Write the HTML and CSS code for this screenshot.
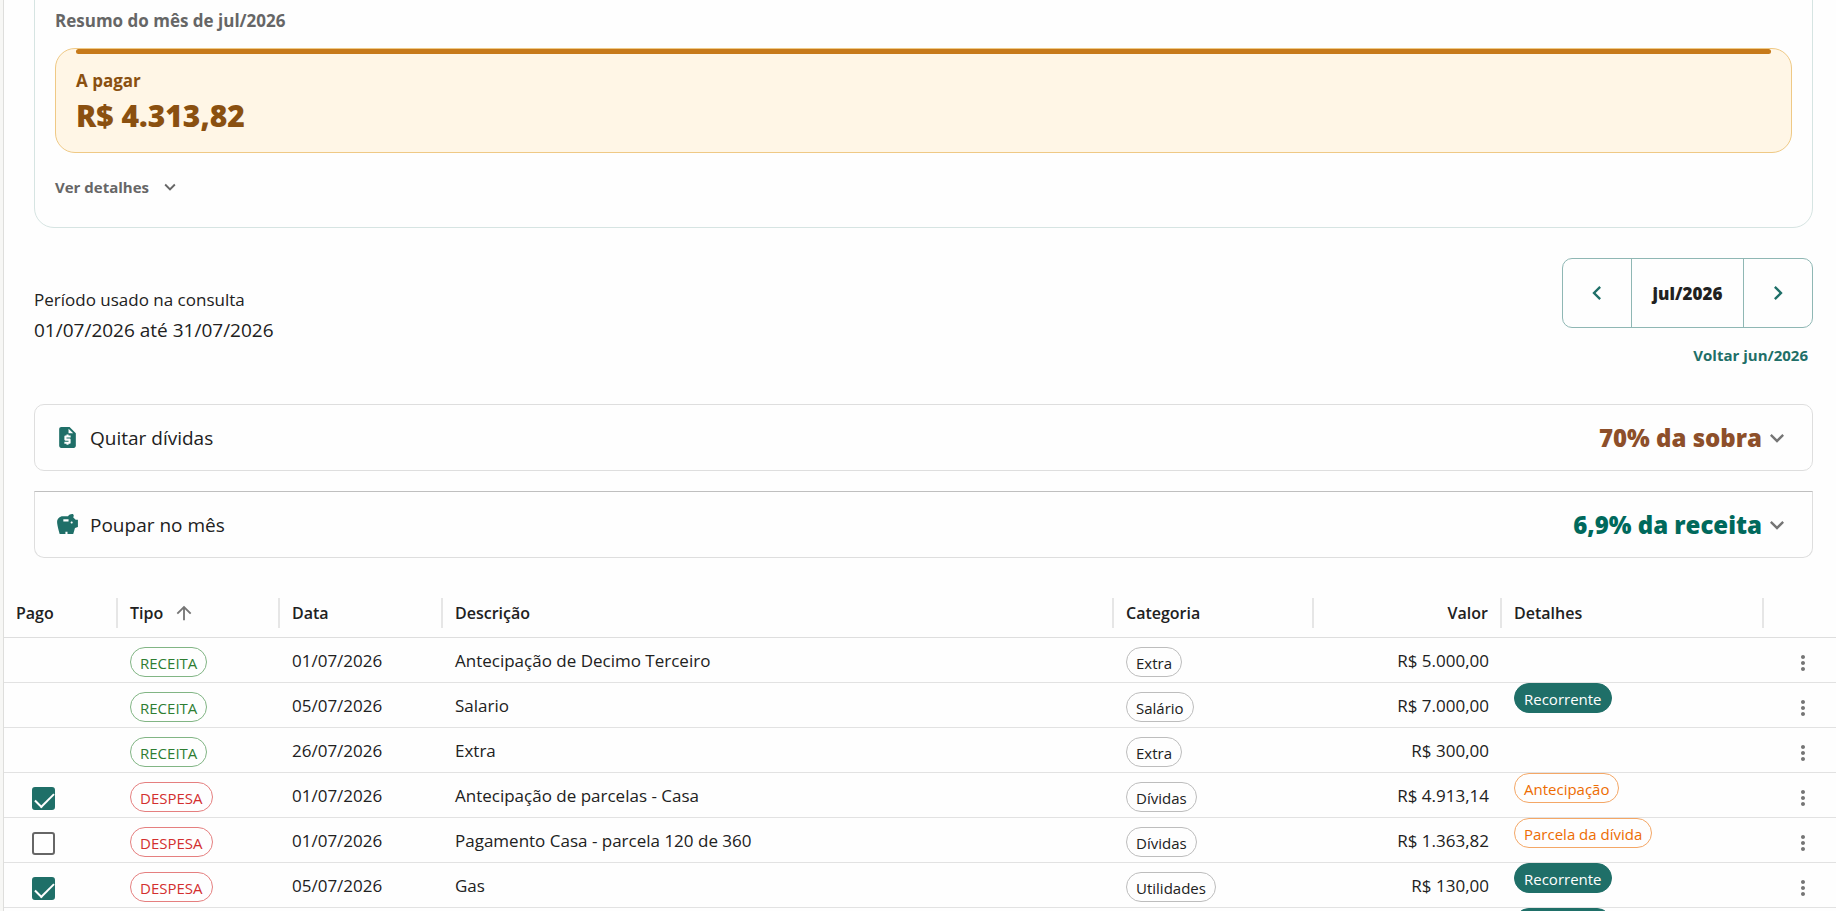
FILE: index.html
```html
<!DOCTYPE html>
<html lang="pt-BR">
<head>
    <meta charset="UTF-8">
    <meta name="viewport" content="width=device-width, initial-scale=1.0">
    <title>Lançamentos do mês</title>
    <link rel="stylesheet" href="styles.css">
</head>
<body>

<main class="page">
    <!-- Month summary -->
    <section class="summary">
        <h2 class="summary-title">Resumo do mês de jul/2026</h2>
        <div class="amount-box">
            <div class="amount-label">A pagar</div>
            <div class="amount-value">R$ 4.313,82</div>
        </div>
        <button type="button" class="details-btn">
            Ver detalhes
            <svg class="icon-small" viewBox="0 0 24 24"><path d="M7.41 8.59 12 13.17l4.59-4.58L18 10l-6 6-6-6z"/></svg>
        </button>
    </section>

    <!-- Period -->
    <section class="period">
        <div class="period-text">
            <div class="period-label">Período usado na consulta</div>
            <div class="period-range">01/07/2026 até 31/07/2026</div>
        </div>
        <div class="period-nav">
            <div class="month-picker">
                <button type="button" class="month-step" aria-label="Mês anterior">
                    <svg class="icon-large" viewBox="0 0 24 24"><path d="M15.41 7.41 14 6l-6 6 6 6 1.41-1.41L10.83 12z"/></svg>
                </button>
                <button type="button" class="month-current">jul/2026</button>
                <button type="button" class="month-step" aria-label="Próximo mês">
                    <svg class="icon-large" viewBox="0 0 24 24"><path d="M10 6 8.59 7.41 13.17 12l-4.58 4.59L10 18l6-6z"/></svg>
                </button>
            </div>
            <a href="#" class="back-link">Voltar jun/2026</a>
        </div>
    </section>

    <!-- Goals -->
    <section class="goals">
        <button type="button" class="goal">
            <svg class="goal-icon" viewBox="0 0 24 24"><path d="M14 2H6c-1.100 0-2 .9-2 2v16c0 1.100.89 2 2 2h12c1.100 0 2-.9 2-2V8l-6-6zm1 10h-4v1h3c.55 0 1 .45 1 1v3c0 .55-.45 1-1 1h-1v1h-2v-1H9v-2h4v-1h-3c-.55 0-1-.45-1-1v-3c0-.55.45-1 1-1h1V9h2v1h2v2zm-2-4V3.500L17.500 8H13z"/></svg>
            <span class="goal-name">Quitar dívidas</span>
            <span class="goal-value debt">70% da sobra</span>
            <svg class="icon-large chevron" viewBox="0 0 24 24"><path d="M7.41 8.59 12 13.17l4.59-4.58L18 10l-6 6-6-6z"/></svg>
        </button>
        <button type="button" class="goal goal-joined">
            <svg class="goal-icon" viewBox="0 0 24 24"><path d="m19.830 7.500-2.270-2.270c.07-.42.180-.81.320-1.150.08-.18.120-.37.120-.58 0-.83-.67-1.500-1.500-1.500-1.640 0-3.090.79-4 2h-5C4.460 4 2 6.460 2 9.500S4.500 21 4.500 21H10v-2h2v2h5.500l1.680-5.590 2.820-.94V7.500h-2.170zM13 9H8V7h5v2zm3 2c-.55 0-1-.45-1-1s.45-1 1-1 1 .45 1 1-.45 1-1 1z"/></svg>
            <span class="goal-name">Poupar no mês</span>
            <span class="goal-value saving">6,9% da receita</span>
            <svg class="icon-large chevron" viewBox="0 0 24 24"><path d="M7.41 8.59 12 13.17l4.59-4.58L18 10l-6 6-6-6z"/></svg>
        </button>
    </section>

    <!-- Entries -->
    <table class="entries">
        <colgroup>
            <col class="col-paid">
            <col class="col-type">
            <col class="col-date">
            <col>
            <col class="col-category">
            <col class="col-value">
            <col class="col-details">
            <col class="col-menu">
        </colgroup>
        <thead>
            <tr>
                <th><div class="head">Pago</div></th>
                <th><div class="head">Tipo <svg class="icon-sort" viewBox="0 0 24 24"><path d="m4 12 1.410 1.410L11 7.830V20h2V7.830l5.580 5.590L20 12l-8-8-8 8z"/></svg></div></th>
                <th><div class="head">Data</div></th>
                <th><div class="head">Descrição</div></th>
                <th><div class="head">Categoria</div></th>
                <th><div class="head head-right">Valor</div></th>
                <th><div class="head">Detalhes</div></th>
                <th></th>
            </tr>
        </thead>
        <tbody id="rows"></tbody>
    </table>
</main>

<script>
    const entries = [
        { type: 'RECEITA', date: '01/07/2026', text: 'Antecipação de Decimo Terceiro', category: 'Extra', value: 'R$ 5.000,00' },
        { type: 'RECEITA', date: '05/07/2026', text: 'Salario', category: 'Salário', value: 'R$ 7.000,00', detail: 'Recorrente', style: 'filled' },
        { type: 'RECEITA', date: '26/07/2026', text: 'Extra', category: 'Extra', value: 'R$ 300,00' },
        { type: 'DESPESA', date: '01/07/2026', text: 'Antecipação de parcelas - Casa', category: 'Dívidas', value: 'R$ 4.913,14', detail: 'Antecipação', style: 'warning', paid: true },
        { type: 'DESPESA', date: '01/07/2026', text: 'Pagamento Casa - parcela 120 de 360', category: 'Dívidas', value: 'R$ 1.363,82', detail: 'Parcela da dívida', style: 'warning', paid: false },
        { type: 'DESPESA', date: '05/07/2026', text: 'Gas', category: 'Utilidades', value: 'R$ 130,00', detail: 'Recorrente', style: 'filled', paid: true },
        { detail: 'Recorrente', style: 'filled' }
    ];

    const menuButton = '<button type="button" class="menu-btn" aria-label="Ações"><svg class="icon" viewBox="0 0 24 24"><path d="M12 8c1.100 0 2-.9 2-2s-.9-2-2-2-2 .9-2 2 .9 2 2 2zm0 2c-1.100 0-2 .9-2 2s.9 2 2 2 2-.9 2-2-.9-2-2-2zm0 6c-1.100 0-2 .9-2 2s.9 2 2 2 2-.9 2-2-.9-2-2-2z"/></svg></button>';

    function chip(text, style) {
        return text ? `<span class="chip ${style}">${text}</span>` : '';
    }

    function checkbox(entry) {
        if (entry.paid === undefined) {
            return '';
        }
        return `<input type="checkbox" class="paid" aria-label="Pago: ${entry.text}" ${entry.paid ? 'checked' : ''}>`;
    }

    document.getElementById('rows').innerHTML = entries.map(entry => `
        <tr>
            <td>${checkbox(entry)}</td>
            <td>${chip(entry.type, entry.type === 'RECEITA' ? 'income' : 'expense')}</td>
            <td>${entry.date || ''}</td>
            <td>${entry.text || ''}</td>
            <td>${chip(entry.category, '')}</td>
            <td class="right">${entry.value || ''}</td>
            <td class="details">${chip(entry.detail, entry.style)}</td>
            <td class="right">${entry.type ? menuButton : ''}</td>
        </tr>`).join('');
</script>

</body>
</html>
```
FILE: styles.css
```css
* {
    box-sizing: border-box;
}

body {
    margin: 0;
    padding-left: 3px;
    height: 100vh;
    overflow: hidden;
    background: #f7f7f5;
    color: #212121;
    font-family: "Open Sans", "Noto Sans", sans-serif;
    font-size: 17px;
}

button {
    font-family: inherit;
    color: inherit;
    background: none;
    border: none;
    padding: 0;
    cursor: pointer;
}

svg {
    fill: currentColor;
    flex: none;
}

.page {
    height: 100%;
    overflow: hidden;
    background: #fefefe;
    border-left: 1px solid #dededc;
}

.icon {
    width: 24px;
    height: 24px;
    display: block;
}

.icon-small {
    width: 22px;
    height: 22px;
}

.icon-large {
    width: 28px;
    height: 28px;
}

/* Month summary */
.summary {
    margin: -20px 23px 0 30px;
    padding: 26px 20px 20px;
    border: 1px solid #d6e4e2;
    border-radius: 20px;
}

.summary-title {
    margin: 0 0 13px;
    font-size: 17px;
    line-height: 28px;
    font-weight: 700;
    color: #666;
}

.amount-box {
    position: relative;
    height: 105px;
    padding: 20px;
    background: #fff6e6;
    border: 1px solid #efc985;
    border-radius: 20px;
    color: #8a5010;
}

/* Accent bar along the top edge */
.amount-box::before {
    content: "";
    position: absolute;
    top: 0;
    left: 20px;
    right: 20px;
    height: 5px;
    border-radius: 3px;
    background: #c77a1a;
}

.amount-label {
    font-size: 17px;
    line-height: 24px;
    font-weight: 700;
}

.amount-value {
    font-size: 30px;
    line-height: 46px;
    font-weight: 800;
}

.details-btn {
    display: flex;
    align-items: center;
    gap: 10px;
    margin-top: 14px;
    height: 40px;
    font-size: 15px;
    font-weight: 700;
    color: #666;
}

/* Period */
.period {
    display: flex;
    justify-content: space-between;
    align-items: center;
    margin: 30px 23px 0 30px;
}

.period-text {
    padding-bottom: 4px;
}

.period-label {
    font-size: 17px;
    line-height: 30px;
}

.period-range {
    font-size: 19px;
    line-height: 30px;
}

.period-nav {
    display: flex;
    flex-direction: column;
    align-items: flex-end;
}

.month-picker {
    display: flex;
    height: 70px;
    border: 1px solid #8fb7b4;
    border-radius: 10px;
}

.month-step {
    display: flex;
    align-items: center;
    justify-content: center;
    width: 68px;
    color: #1f6f68;
}

.month-current {
    width: 113px;
    border: solid #8fb7b4;
    border-width: 0 1px;
    font-size: 17px;
    font-weight: 800;
}

.back-link {
    margin-top: 7px;
    padding-right: 5px;
    font-size: 15px;
    line-height: 40px;
    font-weight: 700;
    color: #1f6f68;
    text-decoration: none;
}

/* Goals */
.goals {
    display: flex;
    flex-direction: column;
    gap: 20px;
    margin: 29px 23px 0 30px;
}

.goal {
    display: flex;
    align-items: center;
    height: 67px;
    padding: 0 21px 0 20px;
    border: 1px solid #dedede;
    border-radius: 10px;
}

.goal-joined {
    border-top-color: #bfbfbf;
    border-radius: 0 0 10px 10px;
}

.goal-icon {
    width: 25px;
    height: 25px;
    color: #1f6f68;
}

.goal-name {
    margin-left: 10px;
    font-size: 19px;
}

.goal-value {
    margin-left: auto;
    margin-right: 1px;
    font-size: 24px;
    font-weight: 800;
}

.goal-value.debt {
    color: #8d4f2a;
}

.goal-value.saving {
    color: #00695c;
}

.chevron {
    color: #757575;
}

/* Entries */
.entries {
    width: 100%;
    margin-top: 30px;
    table-layout: fixed;
    border-collapse: separate;
    border-spacing: 0;
}

.col-paid { width: 114px; }
.col-type { width: 162px; }
.col-date { width: 163px; }
.col-category { width: 200px; }
.col-value { width: 188px; }
.col-details { width: 262px; }
.col-menu { width: 72px; }

.entries th {
    height: 50px;
    padding: 0 0 9px;
    border-bottom: 1px solid #dedede;
    text-align: left;
    vertical-align: bottom;
}

.head {
    display: flex;
    align-items: center;
    height: 30px;
    padding: 0 12px;
    border-right: 2px solid #e6e6e6;
    font-size: 16px;
    font-weight: 600;
}

.head-right {
    justify-content: flex-end;
}

.icon-sort {
    width: 22px;
    height: 22px;
    margin-left: 10px;
    color: #757575;
}

.entries td {
    height: 45px;
    padding: 0 13px 0 12px;
    border-bottom: 1px solid #e2e2e2;
    white-space: nowrap;
}

.entries .right {
    text-align: right;
}

.entries .details {
    padding-top: 0;
    vertical-align: top;
}

.chip {
    display: block;
    width: fit-content;
    height: 30px;
    margin-top: 4px;
    padding: 0 9px;
    border: 1px solid #bdbdbd;
    border-radius: 15px;
    font-size: 15px;
    line-height: 30px;
}

.details .chip {
    margin-top: 0;
}

.chip.income {
    color: #2e7d32;
    border-color: #81b584;
}

.chip.expense {
    color: #d32f2f;
    border-color: #e57f7f;
}

.chip.filled {
    color: #fff;
    background: #1f6f68;
    border-color: #1f6f68;
}

.chip.warning {
    color: #ed6c02;
    border-color: #f4a766;
}

.paid {
    appearance: none;
    display: block;
    width: 23px;
    height: 23px;
    margin: 7px 0 0 16px;
    border: 2px solid #666;
    border-radius: 3px;
    cursor: pointer;
}

.paid:checked {
    border-color: #1f6f68;
    background: #1f6f68;
}

/* Tick mark */
.paid:checked::after {
    content: "";
    display: block;
    width: 17px;
    height: 8px;
    margin: 4px 0 0 1px;
    border: solid #fff;
    border-width: 0 0 2px 2px;
    transform: rotate(-45deg);
}

.menu-btn {
    margin: 5px 8px 0 0;
    color: #757575;
    vertical-align: middle;
}
```
